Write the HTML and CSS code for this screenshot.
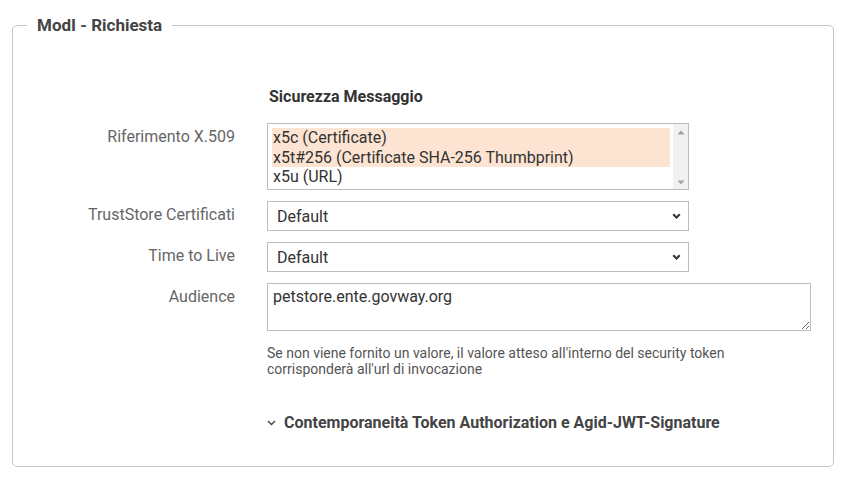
FILE: index.html
```html
<!DOCTYPE html>
<html lang="it">
<head>
<meta charset="utf-8">
<title>ModI - Richiesta</title>
<link rel="stylesheet" href="styles.css">
</head>
<body>
<fieldset class="panel">
  <legend class="panel-title">ModI - Richiesta</legend>
  <div class="section-title">Sicurezza Messaggio</div>

  <div class="row row-first">
    <div class="label">Riferimento X.509</div>
    <div class="listbox">
      <div class="options">
        <div class="opt selected">x5c (Certificate)</div>
        <div class="opt selected">x5t#256 (Certificate SHA-256 Thumbprint)</div>
        <div class="opt">x5u (URL)</div>
      </div>
      <div class="scrollbar">
        <svg width="8" height="5" viewBox="0 0 8 5"><path d="M4 0.5L7.5 4.5H0.5Z" fill="#a3a3a3"/></svg>
        <svg width="8" height="5" viewBox="0 0 8 5"><path d="M4 4.5L7.5 0.5H0.5Z" fill="#a3a3a3"/></svg>
      </div>
    </div>
  </div>

  <div class="row">
    <div class="label">TrustStore Certificati</div>
    <div class="select">
      <span>Default</span>
      <svg class="chev" width="9" height="6" viewBox="0 0 9 6"><path d="M1.2 1.2L4.5 4.5L7.8 1.2" fill="none" stroke="#333" stroke-width="2"/></svg>
    </div>
  </div>

  <div class="row">
    <div class="label">Time to Live</div>
    <div class="select">
      <span>Default</span>
      <svg class="chev" width="9" height="6" viewBox="0 0 9 6"><path d="M1.2 1.2L4.5 4.5L7.8 1.2" fill="none" stroke="#333" stroke-width="2"/></svg>
    </div>
  </div>

  <div class="row">
    <div class="label">Audience</div>
    <div class="field">
      <textarea class="textarea" readonly>petstore.ente.govway.org</textarea>
      <div class="help">Se non viene fornito un valore, il valore atteso all'interno del security token<br>corrisponderà all'url di invocazione</div>
    </div>
  </div>

  <div class="collapse-title">
    <svg width="9" height="6" viewBox="0 0 9 6"><path d="M1 1L4.5 4.5L8 1" fill="none" stroke="#444" stroke-width="1.4"/></svg>
    <span>Contemporaneità Token Authorization e Agid-JWT-Signature</span>
  </div>
</fieldset>
</body>
</html>
```

FILE: styles.css
```css
html, body {
  margin: 0;
  padding: 0;
  background: #ffffff;
}
body {
  padding: 15px 0 0 12px;
  font-family: Roboto, "Liberation Sans", sans-serif;
  color: #333;
}
.panel {
  box-sizing: border-box;
  width: 822px;
  height: 452px;
  margin: 0;
  padding: 0 14px;
  border: 1px solid #c6c6c6;
  border-radius: 5px;
}
.panel-title {
  padding: 0 10px;
  font-size: 17px;
  line-height: 20px;
  font-weight: 700;
  color: #444;
}
.section-title {
  margin: 52px 0 0 242px;
  font-size: 16px;
  line-height: 20px;
  font-weight: 700;
  color: #333;
}
.row {
  display: grid;
  grid-template-columns: 208px auto;
  column-gap: 32px;
  align-items: start;
  margin-top: 11px;
}
.row-first { margin-top: 16px; }
.label {
  text-align: right;
  font-size: 16px;
  line-height: 20px;
  padding-top: 4px;
  color: #666;
}
.listbox {
  box-sizing: border-box;
  width: 422px;
  height: 67px;
  border: 1px solid #bdbdbd;
  display: flex;
  background: #fff;
}
.options {
  flex: 1;
  padding: 4px 3px 0 4px;
}
.opt {
  font-size: 16px;
  line-height: 19.5px;
  color: #333;
  padding-left: 1px;
}
.opt.selected { background: #fde4d2; }
.scrollbar {
  width: 15px;
  background: #f1f1f1;
  display: flex;
  flex-direction: column;
  justify-content: space-between;
  align-items: center;
  padding: 6px 0 4px;
}
.select {
  box-sizing: border-box;
  width: 422px;
  height: 30px;
  border: 1px solid #bdbdbd;
  display: flex;
  align-items: center;
  justify-content: space-between;
  padding: 0 7px 0 9px;
  font-size: 16px;
  color: #333;
  background: #fff;
}
.field { display: flex; flex-direction: column; }
.textarea {
  box-sizing: border-box;
  width: 544px;
  height: 48px;
  border: 1px solid #bdbdbd;
  padding: 3px 5px;
  margin: 0;
  font-family: Roboto, "Liberation Sans", sans-serif;
  font-size: 16px;
  line-height: 19px;
  color: #333;
  resize: both;
  outline: none;
}
.help {
  margin-top: 14px;
  font-size: 14px;
  line-height: 16px;
  color: #555;
}
.collapse-title {
  margin: 36px 0 0 240px;
  display: flex;
  align-items: center;
  gap: 8px;
  font-size: 16px;
  line-height: 20px;
  font-weight: 700;
  color: #444;
}
```
